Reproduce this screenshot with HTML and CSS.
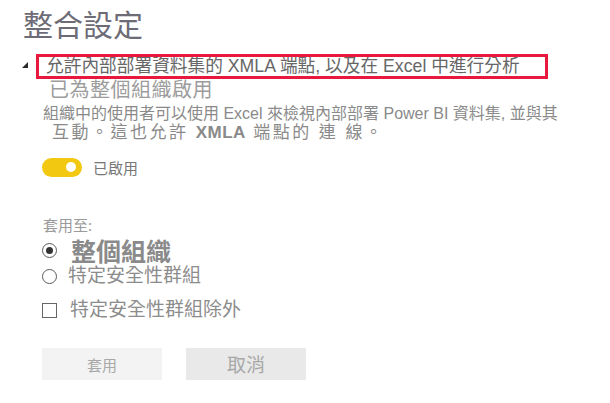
FILE: index.html
```html
<!DOCTYPE html>
<html lang="zh-Hant">
<head>
<meta charset="utf-8">
<title>整合設定</title>
<link rel="stylesheet" href="styles.css">
</head>
<body>
<main class="page">
  <h1 class="title">整合設定</h1>
  <div class="setting-row">
    <svg class="caret" width="6" height="6" viewBox="0 0 6 6"><polygon points="6,0 6,6 0,6" fill="#2b2b2b"/></svg>
    <div class="setting-name">允許內部部署資料集的 XMLA 端點, 以及在 Excel 中進行分析</div>
  </div>
  <div class="status">已為整個組織啟用</div>
  <p class="desc">
    <span class="desc-l1">組織中的使用者可以使用 Excel 來檢視內部部署 Power BI 資料集, 並與其</span>
    <span class="desc-l2">互動。這也允許 <b>XMLA</b> 端點的 連 線。</span>
  </p>
  <div class="toggle-row">
    <span class="toggle"><span class="knob"></span></span>
    <span class="toggle-label">已啟用</span>
  </div>
  <div class="apply-to">套用至:</div>
  <div class="option first">
    <span class="radio checked"></span>
    <span class="opt-label big">整個組織</span>
  </div>
  <div class="option">
    <span class="radio"></span>
    <span class="opt-label">特定安全性群組</span>
  </div>
  <div class="option check-opt">
    <span class="checkbox"></span>
    <span class="opt-label">特定安全性群組除外</span>
  </div>
  <div class="buttons">
    <button class="btn btn-apply">套用</button>
    <button class="btn btn-cancel">取消</button>
  </div>
</main>
</body>
</html>
```
FILE: styles.css
```css
html, body {
  margin: 0;
  padding: 0;
  background: #ffffff;
}
body {
  font-family: "Noto Sans", "Noto Sans CJK TC", sans-serif;
}
.page {
  padding-top: 8px;
}
.title {
  margin: 0 0 0 23px;
  font-size: 30px;
  line-height: 34px;
  font-weight: 400;
  color: #6d6b75;
}
.setting-row {
  display: flex;
  align-items: flex-start;
  margin-top: 12px;
}
.caret {
  margin-left: 22px;
  margin-top: 8px;
  flex: none;
}
.setting-name {
  margin-left: 8px;
  width: 499px;
  border: 3px solid #e8193c;
  padding-left: 7px;
  font-family: "Liberation Sans", "Noto Sans CJK TC", sans-serif;
  font-size: 17.7px;
  line-height: 19px;
  color: #666666;
  white-space: nowrap;
  overflow: hidden;
}
.status {
  margin-left: 49px;
  font-size: 20px;
  line-height: 21px;
  letter-spacing: 0.5px;
  color: #9c9c9c;
}
.desc {
  margin: 5px 0 0 43px;
  color: #8a8a8a;
  font-family: "Liberation Sans", "Noto Sans CJK TC", sans-serif;
}
.desc-l1 {
  display: block;
  font-size: 16px;
  line-height: 18px;
  white-space: nowrap;
}
.desc-l2 {
  display: block;
  margin-left: 9px;
  font-size: 17px;
  line-height: 19px;
  letter-spacing: 2.5px;
  white-space: nowrap;
}
.desc-l2 b {
  font-weight: 700;
  letter-spacing: 0.5px;
}
.toggle-row {
  display: flex;
  align-items: center;
  margin: 15px 0 0 42px;
  height: 20px;
}
.toggle {
  width: 40px;
  height: 19px;
  border-radius: 10px;
  background: #f2c811;
  display: flex;
  align-items: center;
  justify-content: flex-end;
  padding-right: 6px;
  box-sizing: border-box;
}
.knob {
  width: 10px;
  height: 10px;
  border-radius: 50%;
  background: #ffffff;
}
.toggle-label {
  margin-left: 11px;
  font-size: 15px;
  color: #777777;
}
.apply-to {
  margin: 38px 0 0 43px;
  font-size: 15px;
  line-height: 20px;
  color: #9a9a9a;
}
.option {
  display: flex;
  align-items: center;
  height: 26px;
  margin-left: 42px;
}
.option.first {
  margin-top: 2px;
}
.radio {
  width: 15px;
  height: 15px;
  box-sizing: border-box;
  border: 1px solid #5a5a5a;
  border-radius: 50%;
  display: flex;
  align-items: center;
  justify-content: center;
  flex: none;
}
.radio.checked::after {
  content: "";
  width: 7px;
  height: 7px;
  border-radius: 50%;
  background: #333333;
}
.opt-label {
  margin-left: 11px;
  font-family: "Liberation Sans", "Noto Sans CJK TC", sans-serif;
  font-size: 19px;
  line-height: 22px;
  color: #8c8c8c;
}
.opt-label.big {
  margin-left: 14px;
  margin-top: 3px;
  font-size: 25px;
  line-height: 26px;
  font-weight: 700;
  color: #8a8a8a;
}
.check-opt {
  margin-top: 8px;
}
.checkbox {
  width: 15px;
  height: 15px;
  box-sizing: border-box;
  border: 1px solid #666666;
  flex: none;
}
.check-opt .opt-label {
  margin-left: 13px;
}
.buttons {
  display: flex;
  gap: 24px;
  margin: 25px 0 0 42px;
}
.btn {
  width: 120px;
  height: 32px;
  border: none;
  padding: 0;
  font-family: "Noto Sans", "Noto Sans CJK TC", sans-serif;
  color: #a8a8a8;
}
.btn-apply {
  background: #f3f3f3;
  font-size: 15px;
}
.btn-cancel {
  background: #e9e9e9;
  font-size: 19px;
}
```
